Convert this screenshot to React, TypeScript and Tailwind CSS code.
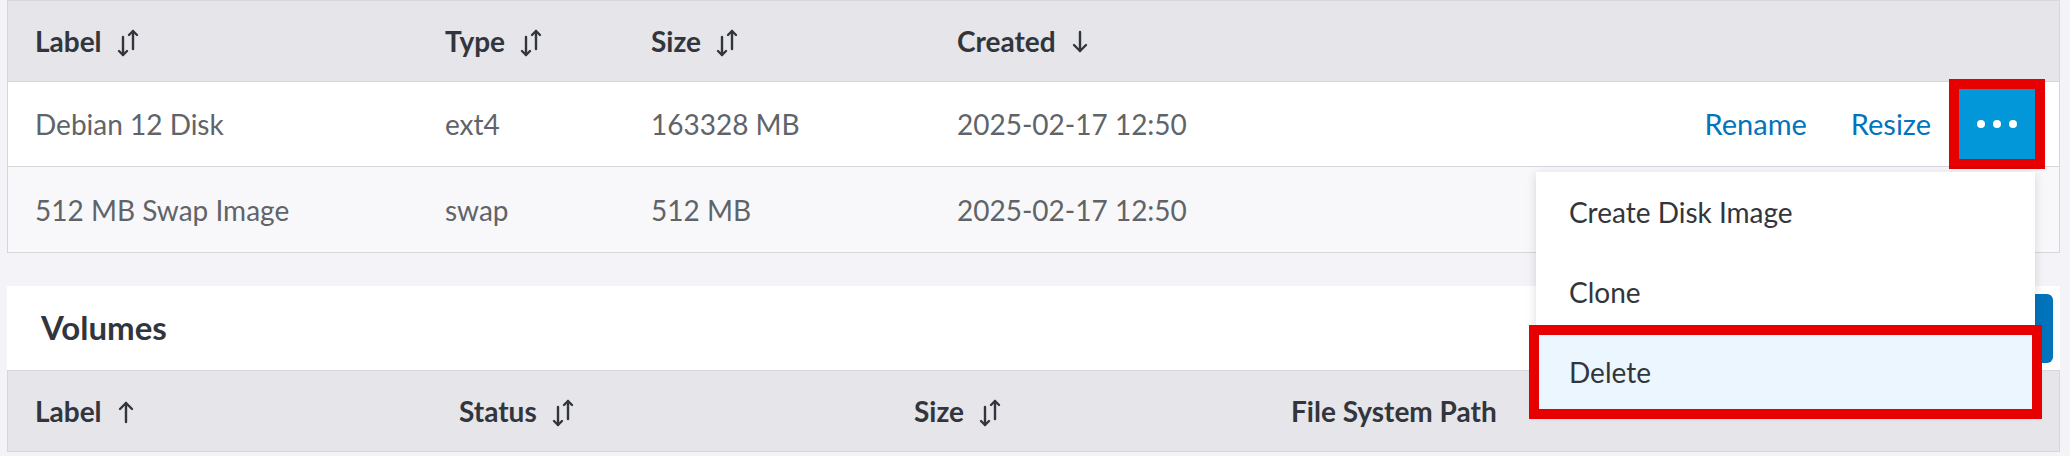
import React from 'react';

const font = { fontFamily: 'Lato, "Noto Sans", "Liberation Sans", sans-serif' };

const SortBoth: React.FC = () => (
  <svg width="24" height="30" viewBox="0 0 24 30" fill="none" stroke="#32363c" strokeWidth="2.4" strokeLinecap="round" strokeLinejoin="round" className="ml-[14px] mt-[4px]">
    <path d="M7 9v18" />
    <path d="M3 23l4 4 4-4" />
    <path d="M17 21V3" />
    <path d="M13 7l4-4 4 4" />
  </svg>
);

const SortDown: React.FC = () => (
  <svg width="20" height="30" viewBox="0 0 20 30" fill="none" stroke="#32363c" strokeWidth="2.4" strokeLinecap="round" strokeLinejoin="round" className="ml-[14px] mt-[2px]">
    <path d="M10 5v19" />
    <path d="M4 18l6 6 6-6" />
  </svg>
);

const SortUp: React.FC = () => (
  <svg width="20" height="30" viewBox="0 0 20 30" fill="none" stroke="#32363c" strokeWidth="2.4" strokeLinecap="round" strokeLinejoin="round" className="ml-[14px] mt-[2px]">
    <path d="M10 25V6" />
    <path d="M4 12l6-6 6 6" />
  </svg>
);

const Th: React.FC<{ w?: string; children: React.ReactNode }> = ({ w, children }) => (
  <div className={`${w ?? 'flex-1'} flex items-center pl-[27px] text-[28px] font-bold text-[#32363c]`}>{children}</div>
);

const Td: React.FC<{ w?: string; children: React.ReactNode }> = ({ w, children }) => (
  <div className={`${w ?? 'flex-1'} flex items-center pl-[27px] text-[28px] text-[#606469]`}>{children}</div>
);

const disks = [
  { label: 'Debian 12 Disk', type: 'ext4', size: '163328 MB', created: '2025-02-17 12:50' },
  { label: '512 MB Swap Image', type: 'swap', size: '512 MB', created: '2025-02-17 12:50' },
];

const App: React.FC = () => {
  return (
    <div className="h-[456px] w-full overflow-hidden bg-[#f4f4f8] pl-[7px] pr-[10px]" style={font}>
      {/* Disks table */}
      <div className="border border-[#d6d6dd]">
        <div className="flex h-[81px] bg-[#e5e5ea] border-b border-[#d6d6dd]">
          <Th w="w-[410px]">Label<SortBoth /></Th>
          <Th w="w-[206px]">Type<SortBoth /></Th>
          <Th w="w-[306px]">Size<SortBoth /></Th>
          <Th>Created<SortDown /></Th>
        </div>
        {disks.map((d, i) => (
          <div key={d.label} className={`flex h-[85px] ${i === 0 ? 'bg-white border-b border-[#d6d6dd]' : 'bg-[#f8f8fb]'}`}>
            <Td w="w-[410px]">{d.label}</Td>
            <Td w="w-[206px]">{d.type}</Td>
            <Td w="w-[306px]">{d.size}</Td>
            <Td>{d.created}</Td>
            {i === 0 && (
              <div className="flex items-center pr-[24px] text-[29px] text-[#0174bc]">
                <span className="mr-[44px]">Rename</span>
                <span className="mr-[28px]">Resize</span>
                <div className="relative">
                  <button className="flex h-[70px] w-[76px] items-center justify-center gap-[8px] bg-[#0297d9] outline-[10px] outline-solid outline-[#e60000]">
                    <span className="h-[8px] w-[8px] rounded-full bg-white" />
                    <span className="h-[8px] w-[8px] rounded-full bg-white" />
                    <span className="h-[8px] w-[8px] rounded-full bg-white" />
                  </button>
                  {/* Open action menu */}
                  <div className="absolute right-0 top-[83px] z-20 w-[499px] bg-white shadow-[0_2px_10px_rgba(0,0,0,0.14)]">
                    <div className="flex h-[80px] items-center pl-[33px] text-[28px] text-[#32363c]">Create Disk Image</div>
                    <div className="flex h-[80px] items-center pl-[33px] text-[28px] text-[#32363c]">Clone</div>
                    <div className="flex h-[80px] items-center pl-[33px] text-[28px] text-[#32363c] bg-[#ebf6fe] outline-[10px] outline-solid outline-[#e60000] outline-offset-[-3px]">Delete</div>
                  </div>
                </div>
              </div>
            )}
          </div>
        ))}
      </div>

      {/* Volumes */}
      <div className="mt-[33px] bg-white">
        <div className="flex h-[84px] items-center justify-between">
          <h2 className="pl-[34px] text-[33px] font-bold text-[#32363c]">Volumes</h2>
          <button className="mr-[7px] h-[69px] w-[250px] rounded-[6px] bg-[#0174bc] text-[24px] font-bold text-white">Create Volume</button>
        </div>
        <div className="flex h-[82px] bg-[#e5e5ea] border border-[#d6d6dd]">
          <Th w="w-[424px]">Label<SortUp /></Th>
          <Th w="w-[455px]">Status<SortBoth /></Th>
          <Th w="w-[377px]">Size<SortBoth /></Th>
          <Th>File System Path</Th>
        </div>
      </div>
    </div>
  );
};

export default App;
